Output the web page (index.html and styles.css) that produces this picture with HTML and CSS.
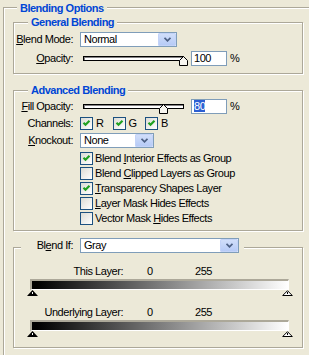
FILE: index.html
```html
<!DOCTYPE html>
<html lang="en">
<head>
  <meta charset="UTF-8">
  <title>Blending Options</title>
  <link rel="stylesheet" href="styles.css">
</head>
<body>
  <div class="options">
    <div class="caption top">Blending Options</div>

    <div class="group general">
      <div class="caption">General Blending</div>
      <div class="row first">
        <span class="label"><u>B</u>lend Mode:</span>
        <div class="combo mode">
          <span class="value">Normal</span>
          <i class="drop"><svg width="7" height="5" viewBox="0 0 7 5"><path d="M0.5 0.8 L3.5 3.8 L6.5 0.8" fill="none" stroke="#4d6185" stroke-width="1.8"/></svg></i>
        </div>
      </div>
      <div class="row">
        <span class="label"><u>O</u>pacity:</span>
        <div class="slider">
          <div class="track"></div>
          <svg class="thumb" style="left: 96px" width="9" height="10" viewBox="0 0 9 10"><path d="M4.5 0.5 L8.5 4.5 V9.5 H0.5 V4.5 Z" fill="#f7f6f0" stroke="#000"/></svg>
        </div>
        <div class="field">100</div>
        <span class="pct">%</span>
      </div>
    </div>

    <div class="group advanced">
      <div class="caption">Advanced Blending</div>
      <div class="row fill">
        <span class="label"><u>F</u>ill Opacity:</span>
        <div class="slider">
          <div class="track"></div>
          <svg class="thumb" style="left: 76px" width="9" height="10" viewBox="0 0 9 10"><path d="M4.5 0.5 L8.5 4.5 V9.5 H0.5 V4.5 Z" fill="#f7f6f0" stroke="#000"/></svg>
        </div>
        <div class="field"><span class="sel">80</span></div>
        <span class="pct">%</span>
      </div>
      <div class="row channels">
        <span class="label">Channels:</span>
        <div class="channel"><i class="check on"><svg width="11" height="11" viewBox="0 0 11 11"><path d="M2.5 4.8 L4.5 6.8 L8.5 2.8" fill="none" stroke="#21a121" stroke-width="2.2"/></svg></i><span>R</span></div>
        <div class="channel"><i class="check on"><svg width="11" height="11" viewBox="0 0 11 11"><path d="M2.5 4.8 L4.5 6.8 L8.5 2.8" fill="none" stroke="#21a121" stroke-width="2.2"/></svg></i><span>G</span></div>
        <div class="channel"><i class="check on"><svg width="11" height="11" viewBox="0 0 11 11"><path d="M2.5 4.8 L4.5 6.8 L8.5 2.8" fill="none" stroke="#21a121" stroke-width="2.2"/></svg></i><span>B</span></div>
      </div>
      <div class="row knock">
        <span class="label"><u>K</u>nockout:</span>
        <div class="combo short">
          <span class="value">None</span>
          <i class="drop"><svg width="7" height="5" viewBox="0 0 7 5"><path d="M0.5 0.8 L3.5 3.8 L6.5 0.8" fill="none" stroke="#4d6185" stroke-width="1.8"/></svg></i>
        </div>
      </div>
      <div class="checks">
        <div class="opt"><i class="check on"><svg width="11" height="11" viewBox="0 0 11 11"><path d="M2.5 4.8 L4.5 6.8 L8.5 2.8" fill="none" stroke="#21a121" stroke-width="2.2"/></svg></i><span>Blend <u>I</u>nterior Effects as Group</span></div>
        <div class="opt"><i class="check"></i><span>Blend <u>C</u>lipped Layers as Group</span></div>
        <div class="opt"><i class="check on"><svg width="11" height="11" viewBox="0 0 11 11"><path d="M2.5 4.8 L4.5 6.8 L8.5 2.8" fill="none" stroke="#21a121" stroke-width="2.2"/></svg></i><span><u>T</u>ransparency Shapes Layer</span></div>
        <div class="opt"><i class="check"></i><span><u>L</u>ayer Mask Hides Effects</span></div>
        <div class="opt"><i class="check"></i><span>Vector Mask <u>H</u>ides Effects</span></div>
      </div>
    </div>

    <div class="group blendif">
      <div class="row legend">
        <span class="label">Bl<u>e</u>nd If:</span>
        <div class="combo wide">
          <span class="value">Gray</span>
          <i class="drop"><svg width="7" height="5" viewBox="0 0 7 5"><path d="M0.5 0.8 L3.5 3.8 L6.5 0.8" fill="none" stroke="#4d6185" stroke-width="1.8"/></svg></i>
        </div>
      </div>

      <div class="level this">
        <span class="name">This Layer:</span>
        <span class="lo">0</span>
        <span class="hi">255</span>
      </div>
      <div class="bar"></div>
      <div class="marks">
        <svg width="11" height="6" viewBox="0 0 11 6"><path d="M5.5 0 L11 6 H0 Z" fill="#000"/><rect x="5" y="2" width="1" height="2" fill="#fff"/></svg>
        <svg width="11" height="6" viewBox="0 0 11 6"><path d="M5.5 0.7 L10.3 5.5 H0.7 Z" fill="#fff" stroke="#000"/><rect x="5" y="2" width="1" height="2" fill="#000"/></svg>
      </div>

      <div class="level under">
        <span class="name">Underlying Layer:</span>
        <span class="lo">0</span>
        <span class="hi">255</span>
      </div>
      <div class="bar"></div>
      <div class="marks">
        <svg width="11" height="6" viewBox="0 0 11 6"><path d="M5.5 0 L11 6 H0 Z" fill="#000"/><rect x="5" y="2" width="1" height="2" fill="#fff"/></svg>
        <svg width="11" height="6" viewBox="0 0 11 6"><path d="M5.5 0.7 L10.3 5.5 H0.7 Z" fill="#fff" stroke="#000"/><rect x="5" y="2" width="1" height="2" fill="#000"/></svg>
      </div>
    </div>
  </div>
</body>
</html>
```

FILE: styles.css
```css
html, body { margin: 0; height: 100%; overflow: hidden; background: #ece9d8; }
body { font: 11px/13px "Liberation Sans", Arial, sans-serif; letter-spacing: -0.45px; color: #000; }
u { text-decoration: underline; }

/* group boxes */
.options { margin: 7px 0 0 3px; width: 305px; height: 348px; border: 1px solid #aca899; box-shadow: inset 1px 1px #fff; }
.group { width: 290px; margin-left: 9px; box-sizing: border-box; border: 1px solid #aca899; box-shadow: inset 1px 1px #fff, 1px 1px #fff; }
.caption { display: table; margin: -7px 0 0 14px; padding: 0 3px; background: #ece9d8; color: #0046d5; font-weight: bold; letter-spacing: -0.5px; }
.caption.top { margin: -6px 0 0 13px; }

.general { margin-top: 7px; padding-bottom: 7px; }
.advanced { margin-top: 16px; padding-bottom: 4px; }
.blendif { margin-top: 16px; padding-bottom: 10px; }

/* rows */
.row { display: flex; align-items: center; height: 15px; margin-top: 4px; }
.row.first { margin-top: 3px; }
.row.fill { margin-top: 2px; }
.row.channels { height: 13px; margin-top: 3px; }
.row.knock { margin-top: 3px; }
.label { width: 59px; margin-right: 7px; text-align: right; flex: none; }

/* combo boxes */
.combo { display: flex; align-items: stretch; height: 15px; box-sizing: border-box; border: 1px solid #7f9db9; background: #fff; flex: none; }
.combo .value { flex: 1; padding-left: 3px; line-height: 13px; }
.combo.mode { width: 97px; }
.combo.short { width: 74px; }
.combo.wide { width: 159px; }
.drop { width: 18px; display: flex; align-items: center; justify-content: center; border-radius: 2px; background: linear-gradient(#d3e0fa, #b4c9f6); box-shadow: inset 0 0 0 1px #c3d3f8; }

/* sliders */
.slider { position: relative; width: 105px; height: 15px; margin-left: 3px; flex: none; }
.track { width: 101px; height: 5px; margin-top: 5px; box-sizing: border-box; border: 1px solid #000; background: #fff; box-shadow: inset 1px 1px #848284; }
.thumb { position: absolute; top: 5px; }
.field { width: 36px; height: 15px; margin-left: 3px; box-sizing: border-box; border: 1px solid #7f9db9; background: #fff; padding-left: 2px; flex: none; }
.sel { background: #2d5fd2; color: #fff; }
.pct { margin-left: 3px; }

/* check boxes */
.check { width: 13px; height: 13px; box-sizing: border-box; border: 1px solid #1c5180; background: linear-gradient(135deg, #dcdcd5, #fff); flex: none; display: block; }
.check svg { display: block; }
.channel { display: flex; align-items: center; gap: 3px; width: 32.5px; flex: none; }
.checks { margin: 3px 0 0 66px; }
.opt { display: flex; align-items: center; gap: 2px; height: 15px; }

/* blend if */
.legend { width: 223px; margin: -10px 0 0 7px; background: #ece9d8; }
.legend .label { width: 52px; }
.level { display: flex; margin-top: 12px; }
.level.under { margin-top: 10px; }
.level .name { width: 109px; text-align: right; }
.level .lo { width: 72px; padding-left: 24px; box-sizing: border-box; }
.bar { width: 259px; height: 11px; margin: 1px 0 0 16px; box-sizing: border-box; border-top: 2px solid #aca899; border-left: 2px solid #aca899; border-right: 1px solid #fff; border-bottom: 1px solid #fff; background: linear-gradient(to right, #000 2%, #fff); }
.marks { display: flex; justify-content: space-between; width: 266px; height: 6px; margin-left: 13px; }
.marks svg { display: block; }
```
